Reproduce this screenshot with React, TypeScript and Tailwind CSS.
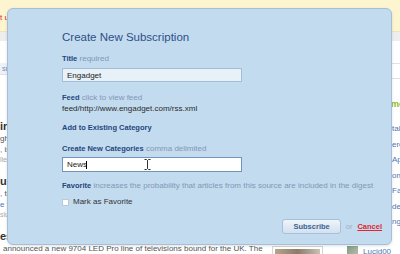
import React from "react";

interface Article {
  headline: string;
  lines: React.ReactNode[];
  meta: string;
}

const articles: Article[] = [
  {
    headline: "in Europe",
    lines: [
      "ghts a thin set",
      <>
        <span className="text-[#4a78b8]">,</span> is due soon
      </>,
    ],
    meta: "lled in HDTV",
  },
  {
    headline: "ure's Mac",
    lines: [
      <>
        <span className="text-[#4a78b8]">,</span> the service
      </>,
      <>
        <span className="text-[#4a78b8]">e</span> flagship titles
      </>,
    ],
    meta: "slugged: Gaming",
  },
];

const tags = ["tablets", "ereaders", "Apple", "omnia", "Facebook", "deals", "ngage"];

export default function App() {
  return (
    <div className="relative w-[400px] h-[254px] overflow-hidden bg-white font-['Liberation_Sans',Arial,sans-serif]">
      {/* page behind the dialog */}
      <div className="h-[32px] bg-[#fcf5cf] border-b border-[#efe5b8] pt-[13px] text-[8px] leading-[10px] text-[#d8261c] whitespace-nowrap">
        t us
      </div>
      <div className="h-[9px] bg-[#eeeeee]" />

      <div className="flex">
        <div className="w-[346px] shrink-0">
          <div className="mt-[22px] h-[12px] bg-[#eef1f5] border-b border-[#dde3ea] pl-[2px] text-[7px] leading-[12px] text-[#6d8fb8] whitespace-nowrap">
            subs
          </div>
          <div className="mt-[44px]">
            {articles.map((a, i) => (
              <div key={i} className="mb-[9px] whitespace-nowrap overflow-hidden">
                <div className="text-[11px] leading-[14px] font-bold text-[#333]">{a.headline}</div>
                {a.lines.map((l, j) => (
                  <div key={j} className="text-[8px] leading-[11px] text-[#555]">
                    {l}
                  </div>
                ))}
                <div className="text-[7px] leading-[10px] text-[#aaa]">{a.meta}</div>
              </div>
            ))}
            <div className="whitespace-nowrap">
              <div className="text-[11px] leading-[14px] font-bold text-[#333]">es 9704</div>
              <div className="flex">
                <div className="w-[272px] pl-[3px] text-[8px] leading-[11px] text-[#555]">
                  announced a new 9704 LED Pro line of televisions bound for the UK. The
                </div>
                <div className="mt-[3px] w-[51px] h-[20px] border border-[#d6d6d6] p-[2px] bg-white">
                  <div className="w-full h-full bg-gradient-to-r from-[#b7a58c] via-[#8b7b69] to-[#c9c2b4]" />
                </div>
              </div>
            </div>
          </div>
        </div>

        <div className="flex-1 whitespace-nowrap overflow-hidden">
          <div className="mt-[22px] h-[16px] border-y border-[#e2e2e2]" />
          <div className="mt-[19px] pl-[45px] text-[9px] leading-[12px] font-bold text-[#8db92e]">more</div>
          <div className="mt-[11px] pl-[46px]">
            {tags.map((t) => (
              <div key={t} className="text-[8px] leading-[15.5px] text-[#4a78b8]">
                {t}
              </div>
            ))}
          </div>
          <div className="mt-[16px] flex items-start gap-[5px] pl-[1px]">
            <div className="w-[11px] h-[11px] bg-gradient-to-br from-[#7f9a84] to-[#b9c3b0]" />
            <div className="text-[8px] leading-[10px] pt-[1px] text-[#4a78b8]">Lucid00</div>
          </div>
        </div>
      </div>

      {/* dialog */}
      <div className="absolute left-[7px] top-[8px] w-[385px] h-[237px] rounded-[6px] border border-[#a6bfd9] bg-[#c3dbef] pl-[54px] pt-[21px] pr-[9px] shadow-[0_1px_3px_rgba(0,0,0,0.12)]">
        <h2 className="text-[11.5px] leading-[14px] text-[#2d4f86]">Create New Subscription</h2>

        <div className="mt-[10px] text-[8px] leading-[10px] text-[#8297b4]">
          <b className="text-[7.5px] text-[#23467c]">Title</b> required
        </div>
        <input
          readOnly
          value="Engadget"
          className="mt-[4px] block w-[180px] h-[14px] border border-[#a3bcd8] bg-[#e8f0f8] px-[4px] text-[8px] text-[#222] outline-none"
        />

        <div className="mt-[11px] text-[8px] leading-[10px] text-[#8297b4]">
          <b className="text-[7.5px] text-[#23467c]">Feed</b> click to view feed
        </div>
        <div className="mt-[1px] text-[8px] leading-[10px] text-[#2b2b2b]">feed/http://www.engadget.com/rss.xml</div>

        <div className="mt-[9px] text-[7.5px] leading-[10px] font-bold text-[#23467c]">Add to Existing Category</div>

        <div className="mt-[11px] text-[8px] leading-[10px] text-[#8297b4]">
          <b className="text-[7.5px] text-[#23467c]">Create New Categories</b> comma delimited
        </div>
        <div className="relative mt-[3px] w-[180px] h-[15px]">
          <input
            readOnly
            value="News"
            className="block w-full h-full border border-[#7393bb] bg-white px-[4px] text-[8px] text-[#222] outline-none"
          />
          <div className="absolute left-[24px] top-[4px] w-[1px] h-[8px] bg-black" />
          <svg className="absolute left-[82px] top-[2px]" width="7" height="11" viewBox="0 0 7 11">
            <path
              d="M0.5 0.5H2.5L3.5 1.5L4.5 0.5H6.5M3.5 1.5V9.5M0.5 10.5H2.5L3.5 9.5L4.5 10.5H6.5"
              fill="none"
              stroke="#333"
              strokeWidth="1"
            />
          </svg>
        </div>

        <div className="mt-[9px] text-[8px] leading-[10px] text-[#8297b4] whitespace-nowrap">
          <b className="text-[7.5px] text-[#23467c]">Favorite</b> increases the probability that articles from this source
          are included in the digest
        </div>
        <label className="mt-[6px] flex items-center gap-[4px] h-[10px]">
          <input type="checkbox" className="appearance-none m-0 w-[7px] h-[7px] bg-white border border-[#b9c9da]" />
          <span className="text-[8px] leading-[10px] text-[#333]">Mark as Favorite</span>
        </label>

        <div className="mt-[12px] flex justify-end items-center gap-[5px] h-[15px]">
          <button className="h-[15px] px-[10px] rounded-[3px] border border-[#a9c0d8] bg-gradient-to-b from-[#eef4fa] to-[#d2e1f0] text-[7.5px] leading-[13px] font-bold text-[#3f5f8f]">
            Subscribe
          </button>
          <span className="text-[7.5px] leading-[10px] text-[#9fb0c6]">or</span>
          <a className="text-[7.5px] leading-[10px] font-bold text-[#e0262c] underline">Cancel</a>
        </div>
      </div>
    </div>
  );
}
